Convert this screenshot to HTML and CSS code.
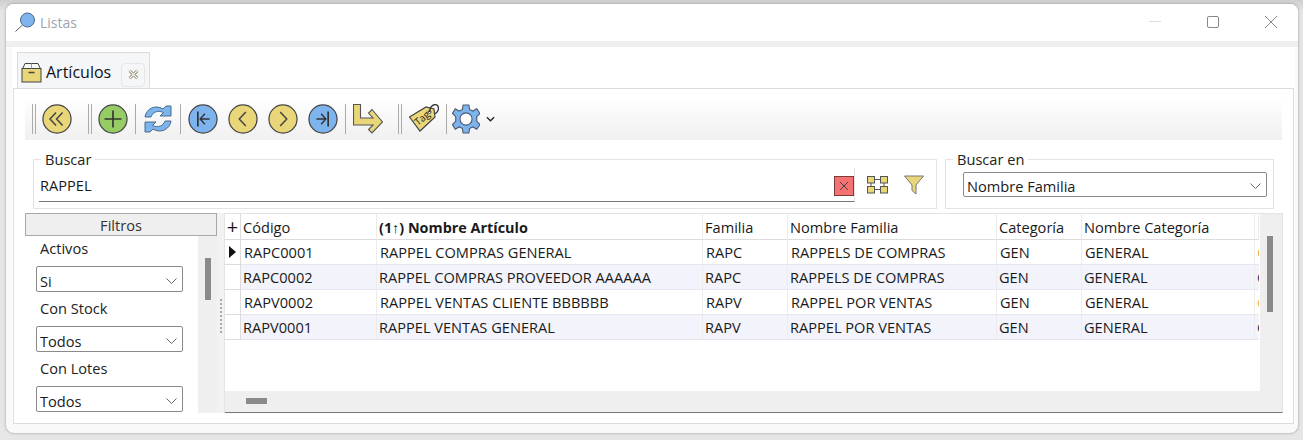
FILE: index.html
```html
<!DOCTYPE html>
<html lang="es">

<head>
    <meta charset="UTF-8">
    <title>Listas</title>
    <link rel="stylesheet" href="styles.css">
</head>

<body>
    <div class="window">
        <!-- Title bar -->
        <div class="titlebar">
            <svg class="app-icon" width="22" height="22" viewBox="0 0 22 22">
                <path d="M0.5 19.5L7.5 13" stroke="#555" stroke-width="1" fill="none"/>
                <circle cx="12.5" cy="8" r="7" fill="#7db4ee" stroke="#4a6a8a" stroke-width="1"/>
            </svg>
            <span class="title">Listas</span>
            <div class="win-buttons">
                <svg width="14" height="14" viewBox="0 0 14 14"><path d="M1 6.5H13" stroke="#ddd" stroke-width="1"/></svg>
                <svg width="14" height="14" viewBox="0 0 14 14"><rect x="1.5" y="1.5" width="11" height="11" rx="1.5" fill="none" stroke="#888" stroke-width="1"/></svg>
                <svg width="14" height="14" viewBox="0 0 14 14"><path d="M1 1L13 13M13 1L1 13" stroke="#888" stroke-width="1" fill="none"/></svg>
            </div>
        </div>

        <div class="content">
            <!-- Tab -->
            <div class="tabs">
                <div class="tab">
                    <svg width="21" height="21" viewBox="0 0 21 21">
                        <path d="M1.5 7 L4 1.5 H17 L19.5 7" fill="#f8f8f8" stroke="#444" stroke-width="1"/>
                        <rect x="1" y="6.5" width="19" height="13.5" fill="#e8d678" stroke="#444" stroke-width="1"/>
                        <path d="M10.5 1.5V6.5" stroke="#999" stroke-width="1"/>
                        <path d="M7.5 10.5H13.5" stroke="#444" stroke-width="1.5"/>
                    </svg>
                    <span class="tab-label">Artículos</span>
                    <span class="tab-close">
                        <svg width="11" height="11" viewBox="0 0 10 10"><path d="M1.5 1.5L8.5 8.5M8.5 1.5L1.5 8.5" stroke="#8c8460" stroke-width="2.6" fill="none"/><path d="M1.5 1.5L8.5 8.5M8.5 1.5L1.5 8.5" stroke="#fff" stroke-width="1.2" fill="none"/></svg>
                    </span>
                </div>
            </div>

            <div class="panel">
                <!-- Toolbar -->
                <div class="toolbar">
                    <span class="grip ml-7"></span>
                    <svg class="tool ml-6" width="30" height="30" viewBox="0 0 32 32"><circle cx="16" cy="16" r="15" fill="#e8d678" stroke="#444" stroke-width="1.3"/><path d="M15 9L8.5 16L15 23M22 9L15.5 16L22 23" fill="none" stroke="#444" stroke-width="1.6"/></svg>
                    <span class="grip ml-16"></span>
                    <svg class="tool ml-6" width="30" height="30" viewBox="0 0 32 32"><circle cx="16" cy="16" r="15" fill="#96cc64" stroke="#444" stroke-width="1.3"/><path d="M16 7V25M7 16H25" stroke="#333" stroke-width="1.8"/></svg>
                    <span class="sep ml-7"></span>
                    <svg class="tool ml-8" width="28" height="30" viewBox="0 0 28 30"><path d="M1 13 C2 5 11 0 19 5 L22 2 H27 V12 H16 L19.5 8.5 C14 6 8.5 8 7 13 Z" fill="#7db4ee" stroke="#4a6a8a" stroke-width="1"/><path d="M27 17 C26 25 17 30 9 25 L6 28 H1 V18 H12 L8.5 21.5 C14 24 19.5 22 21 17 Z" fill="#7db4ee" stroke="#4a6a8a" stroke-width="1"/></svg>
                    <span class="sep ml-8"></span>
                    <svg class="tool ml-7" width="30" height="30" viewBox="0 0 32 32"><circle cx="16" cy="16" r="15" fill="#7db4ee" stroke="#444" stroke-width="1.3"/><path d="M10.5 8V24" stroke="#333" stroke-width="1.8"/><path d="M18 10.5L13 16L18 21.5M13 16H23" fill="none" stroke="#333" stroke-width="1.5"/></svg>
                    <svg class="tool ml-10" width="30" height="30" viewBox="0 0 32 32"><circle cx="16" cy="16" r="15" fill="#e8d678" stroke="#444" stroke-width="1.3"/><path d="M19 8.5L12 16L19 23.5" fill="none" stroke="#444" stroke-width="1.6"/></svg>
                    <svg class="tool ml-10" width="30" height="30" viewBox="0 0 32 32"><circle cx="16" cy="16" r="15" fill="#e8d678" stroke="#444" stroke-width="1.3"/><path d="M13 8.5L20 16L13 23.5" fill="none" stroke="#444" stroke-width="1.6"/></svg>
                    <svg class="tool ml-10" width="30" height="30" viewBox="0 0 32 32"><circle cx="16" cy="16" r="15" fill="#7db4ee" stroke="#444" stroke-width="1.3"/><path d="M21.5 8V24" stroke="#333" stroke-width="1.8"/><path d="M14 10.5L19 16L14 21.5M19 16H9" fill="none" stroke="#333" stroke-width="1.5"/></svg>
                    <span class="sep ml-7"></span>
                    <svg class="tool ml-7" width="30" height="30" viewBox="0 0 30 30"><path d="M0.5 0.5H7.5V14H20L15.5 9L19 5.5L29.5 18L19 29L15.5 25.5L20 21H0.5Z" fill="#e8d678" stroke="#555" stroke-width="1.1"/></svg>
                    <span class="grip ml-15"></span>
                    <svg class="tool ml-7" width="30" height="30" viewBox="0 0 30 30"><path d="M0.5 13L17 3L25 5L26 13L11 27Z" fill="#e8d678" stroke="#444" stroke-width="1.2"/><circle cx="20.5" cy="8" r="1.5" fill="#fff" stroke="#444"/><path d="M20.5 8C21 1 26 -0.5 28.5 1.5C30.5 4 29 9 25.5 10" fill="none" stroke="#333" stroke-width="1.3"/><text x="0" y="0" transform="translate(9 22) rotate(-40)" class="tag-text">Tag</text></svg>
                    <span class="sep ml-7"></span>
                    <svg class="tool ml-5" width="28" height="30" viewBox="0 0 30 32"><path d="M12 1H18L19 6L22.5 7.5L26.5 5L30 10L26.5 13.5V18.5L30 22L26.5 27L22.5 24.5L19 26L18 31H12L11 26L7.5 24.5L3.5 27L0.5 22L4 18.5V13.5L0.5 10L3.5 5L7.5 7.5L11 6Z" fill="#7db4ee" stroke="#4a5a70" stroke-width="1.2"/><circle cx="15" cy="16" r="6.5" fill="#fff" stroke="#4a5a70" stroke-width="1.2"/></svg>
                    <svg class="tool ml-6" width="9" height="6" viewBox="0 0 10 6"><path d="M1 1L5 5L9 1" fill="none" stroke="#222" stroke-width="1.4"/></svg>
                </div>

                <!-- Search -->
                <div class="search-row">
                    <fieldset class="group group-search">
                        <legend>Buscar</legend>
                        <div class="search-line">
                            <div class="search-box">
                                <span>RAPPEL</span>
                                <span class="clear-btn">
                                    <svg width="10" height="10" viewBox="0 0 10 10"><path d="M1 1L9 9M9 1L1 9" stroke="#444" stroke-width="1" fill="none"/></svg>
                                </span>
                            </div>
                            <svg class="search-icon" width="21" height="18" viewBox="0 0 21 18">
                                <g fill="#e8d678" stroke="#555" stroke-width="1">
                                    <rect x="0.5" y="0.5" width="7" height="6.5"/><rect x="13.5" y="0.5" width="7" height="6.5"/>
                                    <rect x="0.5" y="10.5" width="7" height="6.5"/><rect x="13.5" y="10.5" width="7" height="6.5"/>
                                </g>
                                <path d="M8 3.5H13M8 13.5H13M4 7V10M17 7V10" stroke="#555" stroke-width="1"/>
                            </svg>
                            <svg class="search-icon" width="20" height="20" viewBox="0 0 20 20"><path d="M0.5 1H19.5L12 10V19L8 15.5V10Z" fill="#e8d678" stroke="#777" stroke-width="1"/></svg>
                        </div>
                    </fieldset>
                    <fieldset class="group group-field">
                        <legend>Buscar en</legend>
                        <div class="combo combo-field">
                            <span>Nombre Familia</span>
                            <svg width="11" height="6" viewBox="0 0 11 6"><path d="M0.5 0.5L5.5 5.5L10.5 0.5" fill="none" stroke="#666" stroke-width="1"/></svg>
                        </div>
                    </fieldset>
                </div>

                <div class="main">
                    <!-- Filters -->
                    <div class="filters">
                        <div class="filters-head">Filtros</div>
                        <div class="filters-body">
                            <div class="filters-list">
                                <div class="filter-label">Activos</div>
                                <div class="combo"><span>Si</span><svg width="11" height="6" viewBox="0 0 11 6"><path d="M0.5 0.5L5.5 5.5L10.5 0.5" fill="none" stroke="#666" stroke-width="1"/></svg></div>
                                <div class="filter-label">Con Stock</div>
                                <div class="combo"><span>Todos</span><svg width="11" height="6" viewBox="0 0 11 6"><path d="M0.5 0.5L5.5 5.5L10.5 0.5" fill="none" stroke="#666" stroke-width="1"/></svg></div>
                                <div class="filter-label">Con Lotes</div>
                                <div class="combo"><span>Todos</span><svg width="11" height="6" viewBox="0 0 11 6"><path d="M0.5 0.5L5.5 5.5L10.5 0.5" fill="none" stroke="#666" stroke-width="1"/></svg></div>
                            </div>
                            <div class="vscroll vscroll-filters"><span class="vthumb"></span></div>
                        </div>
                    </div>

                    <div class="splitter"><span class="dots"></span></div>

                    <!-- Grid -->
                    <div class="grid">
                        <div class="grid-top">
                            <div class="table">
                                <div class="row head">
                                    <div class="cell ind plus">+</div>
                                    <div class="cell">Código</div>
                                    <div class="cell"><b>(1↑) Nombre Artículo</b></div>
                                    <div class="cell">Familia</div>
                                    <div class="cell">Nombre Familia</div>
                                    <div class="cell">Categoría</div>
                                    <div class="cell">Nombre Categoría</div>
                                    <div class="cell"></div>
                                </div>
                                <div class="row">
                                    <div class="cell ind"><span class="arrow"></span></div>
                                    <div class="cell">RAPC0001</div>
                                    <div class="cell">RAPPEL COMPRAS GENERAL</div>
                                    <div class="cell">RAPC</div>
                                    <div class="cell">RAPPELS DE COMPRAS</div>
                                    <div class="cell">GEN</div>
                                    <div class="cell">GENERAL</div>
                                    <div class="cell tail tail-light">O</div>
                                </div>
                                <div class="row alt">
                                    <div class="cell ind"></div>
                                    <div class="cell">RAPC0002</div>
                                    <div class="cell">RAPPEL COMPRAS PROVEEDOR AAAAAA</div>
                                    <div class="cell">RAPC</div>
                                    <div class="cell">RAPPELS DE COMPRAS</div>
                                    <div class="cell">GEN</div>
                                    <div class="cell">GENERAL</div>
                                    <div class="cell tail">O</div>
                                </div>
                                <div class="row">
                                    <div class="cell ind"></div>
                                    <div class="cell">RAPV0002</div>
                                    <div class="cell">RAPPEL VENTAS CLIENTE BBBBBB</div>
                                    <div class="cell">RAPV</div>
                                    <div class="cell">RAPPEL POR VENTAS</div>
                                    <div class="cell">GEN</div>
                                    <div class="cell">GENERAL</div>
                                    <div class="cell tail tail-light">O</div>
                                </div>
                                <div class="row alt">
                                    <div class="cell ind"></div>
                                    <div class="cell">RAPV0001</div>
                                    <div class="cell">RAPPEL VENTAS GENERAL</div>
                                    <div class="cell">RAPV</div>
                                    <div class="cell">RAPPEL POR VENTAS</div>
                                    <div class="cell">GEN</div>
                                    <div class="cell">GENERAL</div>
                                    <div class="cell tail">O</div>
                                </div>
                            </div>
                            <div class="vscroll vscroll-grid"><span class="vthumb"></span></div>
                        </div>
                        <div class="hscroll"><span class="hthumb"></span></div>
                    </div>
                </div>
            </div>
        </div>
    </div>
</body>

</html>
```

FILE: styles.css
```css
* {
    box-sizing: border-box;
}

html, body {
    margin: 0;
    height: 100%;
    overflow: hidden;
}

body {
    font-family: "Open Sans", "Noto Sans", Arial, sans-serif;
    font-size: 14.6px;
    color: #1a1a1a;
    background: linear-gradient(#cfcfcf 0, #e6e6e6 12px);
    padding: 4px 5px 7px 6px;
}

.window {
    height: 429px;
    background: #f9f9f9;
    border-radius: 8px;
    box-shadow: 0 0 3px rgba(0, 0, 0, 0.35);
    overflow: hidden;
    display: flex;
    flex-direction: column;
}

.titlebar {
    height: 43px;
    flex: none;
    background: #fff;
    border-bottom: 6px solid #efefef;
    display: flex;
    align-items: center;
    padding-left: 9px;
    padding-right: 20px;
}

.title {
    margin-left: 3px;
    font-size: 14px;
    color: #a0a4aa;
}

.win-buttons {
    margin-left: auto;
    margin-top: -1px;
    display: flex;
    gap: 44px;
}

.content {
    margin: 0 3px 9px 6px;
    flex: 1;
    background: #fff;
    display: flex;
    flex-direction: column;
    min-height: 0;
}

.tabs {
    height: 41px;
    flex: none;
    padding: 5px 0 0 5px;
}

.tab {
    width: 133px;
    height: 36px;
    background: #f5f6f8;
    border: 1px solid #dcdcdc;
    border-bottom: none;
    display: flex;
    align-items: center;
    padding: 3px 0 0 3px;
}

.tab-label {
    font-size: 16px;
    color: #111;
    margin-left: 4px;
}

.tab-close {
    width: 24px;
    height: 24px;
    margin: 5px 0 0 10px;
    border: 1px solid #e6e6e6;
    border-radius: 4px;
    display: flex;
    align-items: center;
    justify-content: center;
}

.panel {
    flex: 1;
    min-height: 0;
    margin: 0 1px 0 1px;
    border: 1px solid #dcdcdc;
    padding: 8px 0 0 11px;
}

.toolbar {
    width: 1257px;
    height: 43px;
    display: flex;
    align-items: center;
    background: linear-gradient(#fff, #f0f0f0);
}

.ml-5 { margin-left: 5px; }
.ml-6 { margin-left: 6px; }
.ml-7 { margin-left: 7px; }
.ml-8 { margin-left: 8px; }
.ml-10 { margin-left: 10px; }
.ml-15 { margin-left: 15px; }
.ml-16 { margin-left: 16px; }

.grip {
    width: 4px;
    height: 30px;
    border-left: 1px solid #aaa;
    border-right: 1px solid #aaa;
    flex: none;
}

.sep {
    width: 1px;
    height: 30px;
    background: #aaa;
    flex: none;
}

.tool {
    flex: none;
}

.tag-text {
    font-size: 10px;
    fill: #222;
}

.search-row {
    display: flex;
    gap: 8px;
    height: 58px;
    margin: 11px 0 4px 8px;
}

.group {
    margin: 0;
    min-width: 0;
    border: 1px solid #e4e4e4;
    padding: 0 6px;
    height: 58px;
}

.group legend {
    padding: 0 4px;
    margin-left: 1px;
    line-height: 17px;
    color: #222;
}

.group-search {
    width: 904px;
}

.group-field {
    width: 329px;
    padding-left: 17px;
}

.group-field legend {
    margin-left: -10px;
}

.search-line {
    display: flex;
    align-items: center;
}

.search-box {
    width: 816px;
    height: 34px;
    border-bottom: 1px solid #777;
    border-right: 1px solid #e4e4e4;
    display: flex;
    align-items: center;
    justify-content: space-between;
    margin-left: -1px;
    padding-left: 1px;
}

.clear-btn {
    width: 20px;
    height: 20px;
    margin-top: 2px;
    background: #f47272;
    border: 1px solid #7a3a3a;
    display: flex;
    align-items: center;
    justify-content: center;
}

.search-icon {
    flex: none;
    margin-left: 12px;
}

.search-icon + .search-icon {
    margin-left: 16px;
}

.combo {
    width: 147px;
    height: 26px;
    border: 1px solid #8a8a8a;
    border-radius: 2px;
    background: #fff;
    display: flex;
    align-items: center;
    justify-content: space-between;
    padding: 3px 5px 0 3px;
}

.combo-field {
    width: 304px;
    height: 25px;
    margin-top: 4px;
}

.main {
    display: flex;
    height: 200px;
}

.filters {
    width: 192px;
    flex: none;
    overflow: hidden;
}

.filters-head {
    height: 23px;
    background: #efefef;
    border: 1px solid #a8a8a8;
    text-align: center;
    line-height: 23px;
    color: #333;
}

.filters-body {
    display: flex;
    height: 177px;
}

.filters-list {
    width: 173px;
    padding-left: 11px;
}

.filter-label {
    height: 34px;
    padding-left: 4px;
    padding-top: 6px;
    line-height: 20px;
    color: #222;
}

.filter-label:first-child {
    height: 30px;
    padding-top: 2px;
}

.vscroll {
    background: #efefef;
    flex: none;
    display: flex;
    justify-content: center;
}

.vscroll-filters {
    width: 19px;
    padding-top: 22px;
}

.vscroll-grid {
    width: 22px;
    padding: 22px 2px 0 0;
}

.vthumb {
    width: 6px;
    background: #8a8a8a;
    height: 42px;
}

.vscroll-grid .vthumb {
    height: 76px;
}

.splitter {
    width: 8px;
    flex: none;
    position: relative;
    background: #f2f2f2;
    border-right: 1px solid #e4e4e4;
}

.dots {
    position: absolute;
    left: 3px;
    top: 86px;
    height: 34px;
    width: 2px;
    background: repeating-linear-gradient(#aaa 0 2px, #f2f2f2 2px 4px);
}

.grid {
    width: 1058px;
    flex: none;
    border-top: 1px solid #e4e4e4;
    border-right: 1px solid #e4e4e4;
    border-bottom: 1px solid #777;
    display: flex;
    flex-direction: column;
}

.grid-top {
    display: flex;
    height: 177px;
}

.table {
    width: 1035px;
    overflow: hidden;
}

.row {
    display: grid;
    grid-template-columns: 16px 136px 326px 85px 209px 85px 173px 4px 1px;
    height: 25px;
}

.row.head {
    height: 26px;
}

.cell {
    border-right: 1px solid #ececec;
    border-bottom: 1px solid #e6e6f0;
    padding: 0 0 0 3px;
    line-height: 25px;
    white-space: nowrap;
    overflow: hidden;
}

.alt .cell,
.head .cell {
    padding-left: 2px;
}

.head .cell {
    padding-top: 1px;
    border-bottom: 1px solid #dcdcdc;
}

.head b {
    font-size: 14.4px;
}

.ind,
.head .ind,
.alt .ind {
    padding: 0;
    background: #fff;
    border-right: 1px solid #dcdcdc;
    border-bottom: 1px solid #dcdcdc;
    display: flex;
    align-items: center;
    justify-content: center;
}

.plus {
    font-size: 20px;
}

.arrow {
    width: 0;
    height: 0;
    border-left: 7px solid #111;
    border-top: 6px solid transparent;
    border-bottom: 6px solid transparent;
}

.alt .cell:not(.ind) {
    background: #f2f3fb;
}

.tail,
.alt .tail {
    padding: 0 0 0 2px;
    border-right: none;
    color: #1a2a6a;
}

.tail-light {
    color: #f0b050;
}

.hscroll {
    height: 21px;
    background: #efefef;
    padding: 7px 0 0 21px;
}

.hthumb {
    display: block;
    width: 21px;
    height: 6px;
    background: #8a8a8a;
}
```
